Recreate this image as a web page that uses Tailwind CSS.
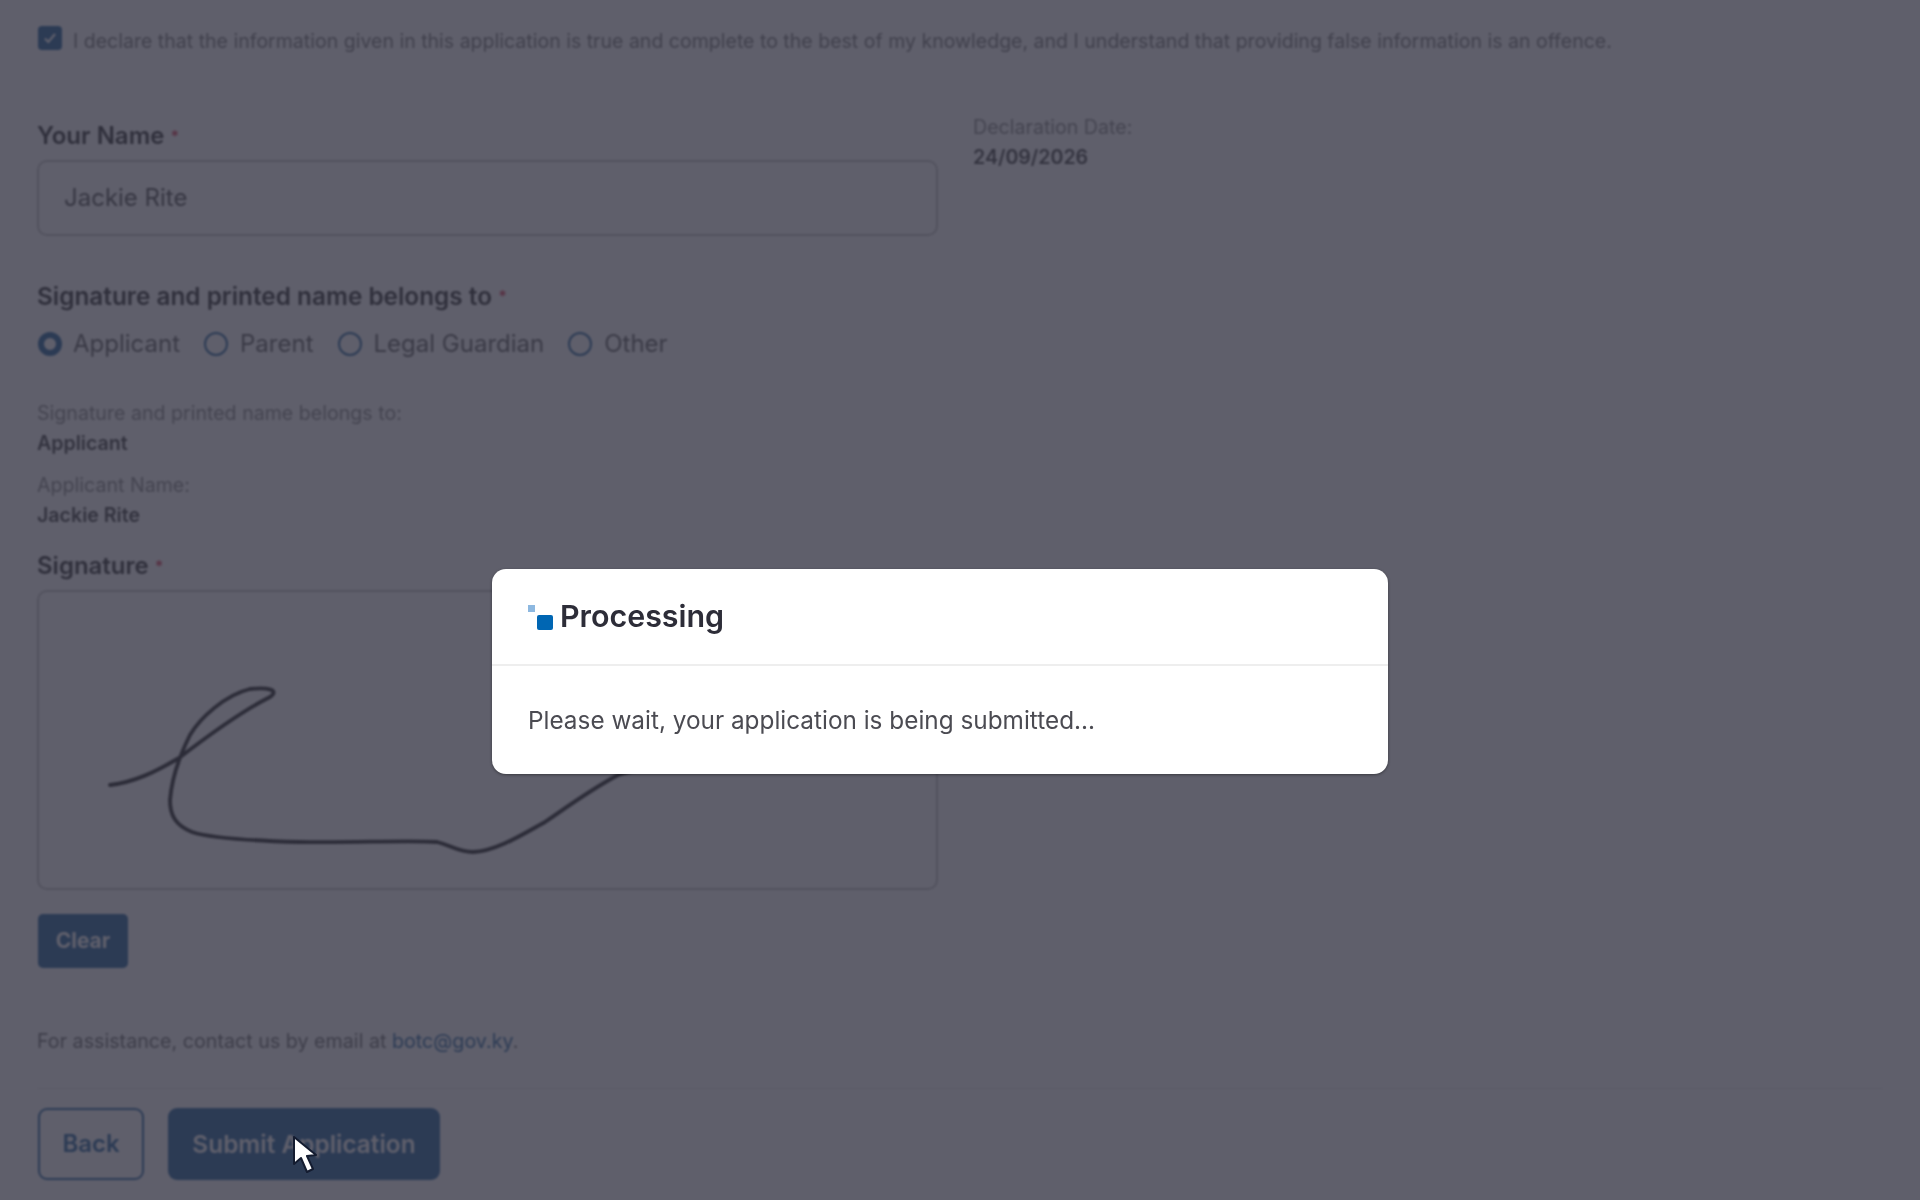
<!DOCTYPE html>
<html lang="en">
<head>
<meta charset="utf-8">
<title>Processing</title>
<script src="https://cdn.jsdelivr.net/npm/@tailwindcss/browser@4"></script>
</head>
<body class="bg-white overflow-hidden">
<div class="relative w-[1920px] h-[1200px] overflow-hidden font-['Inter',sans-serif]">
  <main class="h-full pt-[26px] px-[37px] blur-[0.9px]">
    <div class="flex h-[25px] items-start">
      <span class="w-[24px] h-[24px] ml-px rounded-[4px] bg-[#004a8c] flex items-center justify-center">
        <svg class="w-[18px] h-[18px]" viewBox="0 0 16 16" fill="none" stroke="#fff" stroke-width="2"><path d="M3.5 8.5l3 3 6-7"/></svg>
      </span>
      <p class="ml-[11px] text-[19.55px] leading-[30px] text-[#666] whitespace-nowrap">I declare that the information given in this application is true and complete to the best of my knowledge, and I understand that providing false information is an offence.</p>
    </div>

    <div class="mt-[61px] flex gap-[35px]">
      <div class="w-[901px] pt-[9px]">
        <label class="block h-[30px] text-[24px] leading-[30px] font-semibold text-[#111]">Your Name <span class="text-[#d01030] text-[16px] align-top">*</span></label>
        <div class="mt-[9px] h-[76px] rounded-[10px] border-2 border-[#bbb] flex items-center pl-[25px] text-[24px] text-[#333]">Jackie Rite</div>
      </div>
      <div class="text-[19.6px] leading-[30px]">
        <div class="text-[#777]">Declaration Date:</div>
        <div class="font-semibold text-[#222]">24/09/2026</div>
      </div>
    </div>

    <label class="block mt-[44.5px] h-[30px] text-[24.35px] leading-[30px] font-semibold text-[#111]">Signature and printed name belongs to <span class="text-[#d01030] text-[16px] align-top">*</span></label>
    <div class="mt-[20px] h-[26px] flex items-center text-[24px] text-[#444]">
      <span class="ml-px w-[24px] h-[24px] rounded-full border-[6px] border-[#004a8c] bg-white"></span>
      <span class="ml-[11px]">Applicant</span>
      <span class="ml-[24px] w-[24px] h-[24px] rounded-full border-2 border-[#004a8c]"></span>
      <span class="ml-[12px]">Parent</span>
      <span class="ml-[24px] w-[24px] h-[24px] rounded-full border-2 border-[#004a8c]"></span>
      <span class="ml-[12px]">Legal Guardian</span>
      <span class="ml-[24px] w-[24px] h-[24px] rounded-full border-2 border-[#004a8c]"></span>
      <span class="ml-[12px]">Other</span>
    </div>

    <div class="mt-[41.5px] text-[19.6px] leading-[30px]">
      <div class="text-[#777]">Signature and printed name belongs to:</div>
      <div class="font-semibold text-[#222]">Applicant</div>
      <div class="mt-[12px] text-[#777]">Applicant Name:</div>
      <div class="font-semibold text-[#222]">Jackie Rite</div>
    </div>

    <label class="block mt-[21px] h-[30px] text-[24px] leading-[30px] font-semibold text-[#111]">Signature <span class="text-[#d01030] text-[16px] align-top">*</span></label>
    <div class="mt-[9px] w-[901px] h-[300px] rounded-[10px] border-2 border-[#bbb]">
      <svg class="w-full h-full" viewBox="39 592 897 296" fill="none" stroke="#000" stroke-width="3.8" stroke-linecap="round" stroke-linejoin="round">
        <path d="M110 785C135 782 155 772 179 758C205 738 240 712 270 697C280 690 268 687 250 689C225 695 200 718 190 735C180 755 172 775 170 800C170 815 175 825 192 832C210 838 260 841 300 842C350 843 410 840 437 842C450 845 458 852 473 852C495 852 525 833 545 822C570 805 590 790 618 775C640 768 660 765 680 760"/>
      </svg>
    </div>
    <button class="block mt-[24px] ml-px w-[90px] h-[54px] rounded-[5px] bg-[#004a8c] text-white text-[21px] font-bold">Clear</button>

    <p class="mt-[58px] h-[30px] text-[19.7px] leading-[30px] text-[#555]">For assistance, contact us by email at <a class="text-[#004a8c]">botc@gov.ky</a>.</p>
    <div class="mt-[32px] h-px bg-[#e5e5e5]"></div>
    <div class="mt-[19px] flex gap-[24px] ml-px">
      <button class="w-[106px] h-[72px] rounded-[9px] border-2 border-[#004a8c] text-[#004a8c] text-[24px] font-semibold">Back</button>
      <button class="w-[272px] h-[72px] rounded-[9px] bg-[#004a8c] text-white text-[24.4px] font-semibold">Submit Application</button>
    </div>
  </main>

  <div class="absolute inset-0 bg-[#373746]/80"></div>

  <svg class="absolute left-[290px] top-[1134px] w-[30px] h-[42px] blur-[0.5px]" viewBox="0 0 30 42">
    <path d="M4 3L4 30L11 24L17 38L23 35L17 22L26 21Z" fill="#fff" stroke="#141c30" stroke-width="2" stroke-linejoin="round"/>
  </svg>

  <div class="absolute left-[492px] top-[569px] w-[896px] h-[205px] bg-white rounded-[14px] blur-[0.7px] shadow-[0_1px_3px_rgba(0,0,0,0.4)]">
    <div class="h-[97px] border-b-2 border-[#eee] flex items-center pl-[36px]">
      <span class="relative block w-[25px] h-[26px] mr-[7px] mt-[2px]">
        <span class="absolute left-0 top-0 w-[7px] h-[7px] bg-[#8db8e0]"></span>
        <span class="absolute left-[9px] top-[10px] w-[16px] h-[15px] rounded-[2px] bg-[#0066b3]"></span>
      </span>
      <h2 class="text-[30.4px] font-semibold text-[#2d2d38]">Processing</h2>
    </div>
    <p class="pl-[36px] pt-[38.5px] text-[24.35px] leading-[30px] text-[#4b4b52]">Please wait, your application is being submitted...</p>
  </div>
</div>
</body>
</html>
